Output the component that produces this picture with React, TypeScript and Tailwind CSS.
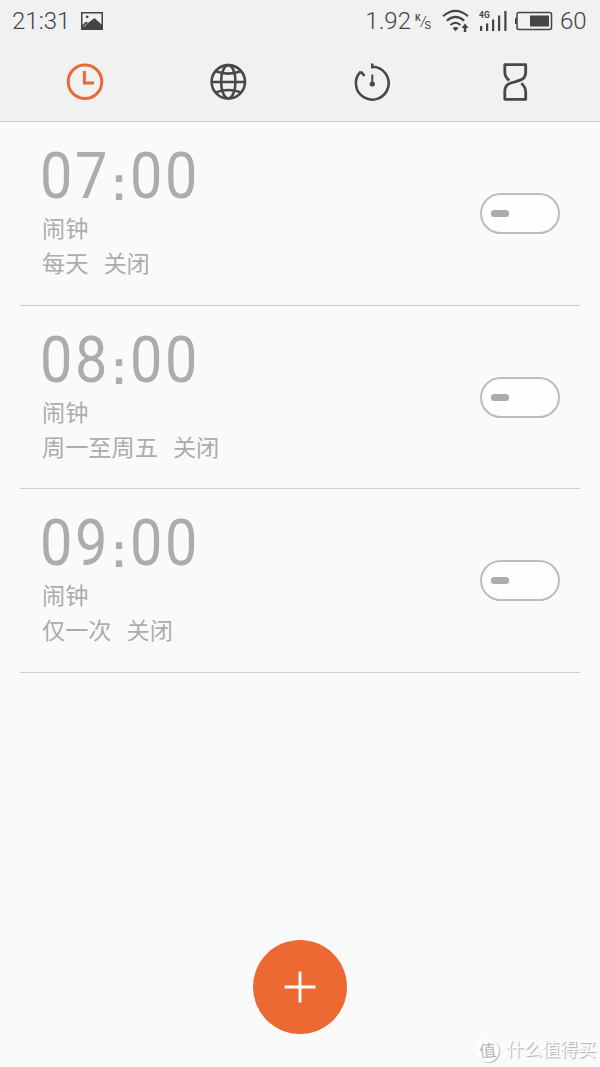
type Alarm = { hour: string; minute: string; label: string; repeat: string; state: string };

const alarms: Alarm[] = [
  { hour: "07", minute: "00", label: "闹钟", repeat: "每天", state: "关闭" },
  { hour: "08", minute: "00", label: "闹钟", repeat: "周一至周五", state: "关闭" },
  { hour: "09", minute: "00", label: "闹钟", repeat: "仅一次", state: "关闭" },
];

function StatusBar() {
  return (
    <div className="flex h-[41px] items-center pl-[12px] pr-[13px] text-[24px] font-light leading-none text-[#444]">
      <span className="w-[69px] whitespace-nowrap">21:31</span>
      <svg className="h-[18px] w-[22px]" viewBox="0 0 22 18">
        <path fill="#444" fillRule="evenodd" d="M0 0H22V18H0ZM1.5 1.5V13L5.2 9.5L7 11L13.5 6L20.5 12.5V1.5Z" />
        <circle cx="6.2" cy="4.8" r="1.4" fill="#444" />
        <path d="M2.5 15 6 11.5" stroke="#eee" strokeWidth="0.8" />
      </svg>
      <div className="ml-auto flex items-center">
        <span>1.92</span>
        <svg className="ml-[4px] h-[20px] w-[18px]" viewBox="0 0 18 20" fill="#444" fontFamily="Roboto, sans-serif">
          <text x="0" y="9.5" fontSize="9" fontWeight="500">K</text>
          <path d="M11 5 5.5 16" stroke="#555" strokeWidth="1" />
          <text x="9.5" y="18" fontSize="11" fontWeight="400">S</text>
        </svg>
        <svg className="ml-[9px] h-[24px] w-[28px]" viewBox="0 0 28 24" fill="none" stroke="#444" strokeWidth="2">
          <path d="M1 7.2Q13.5-3.5 26 7.2M4.8 11.8Q13.5 4 22.2 11.8M8.5 16Q13.5 11.5 18.5 16" />
          <path d="M10.5 19Q13.5 17 16.5 19L13.5 22.3Z" fill="#444" stroke="none" />
          <path d="M23 14.5 26.5 19H24.2V23H21.8V19H19.5Z" fill="#444" stroke="none" />
        </svg>
        <svg className="ml-[9px] h-[22px] w-[29px]" viewBox="0 0 29 22" fill="#444">
          <text x="0" y="8" fontSize="8.5" fontWeight="700" fontFamily="Roboto, sans-serif">4G</text>
          <path d="M1 16H3.2V21H1ZM7 13.5H9.2V21H7ZM13 9.5H15.2V21H13ZM19 5.5H21.2V21H19ZM25.3 1H27.5V21H25.3Z" />
        </svg>
        <svg className="ml-[7px] mr-[7px] h-[20px] w-[38px]" viewBox="0 0 38 20">
          <rect x="2" y="1.5" width="34.5" height="17" rx="2" fill="none" stroke="#444" strokeWidth="1.5" />
          <path d="M0 7H2V13H0ZM15 4.5H34V15.5H15Z" fill="#444" />
        </svg>
        <span className="w-[27px] whitespace-nowrap">60</span>
      </div>
    </div>
  );
}

function TabBar() {
  return (
    <nav className="flex h-[80px] justify-between px-[65px]">
      <svg className="h-[80px] w-[40px]" viewBox="0 0 40 80" fill="none" stroke="#e66a3a" strokeWidth="3">
        <circle cx="20" cy="40.7" r="16.8" />
        <path d="M19.4 30V42H29" />
      </svg>
      <svg className="h-[80px] w-[40px]" viewBox="0 0 40 80" fill="none" stroke="#484848" strokeWidth="2.6">
        <circle cx="20.3" cy="40.8" r="16.7" />
        <ellipse cx="20.3" cy="40.8" rx="7.2" ry="16.7" />
        <path d="M3.3 41H37.3M7.8 30.2Q20.3 35 32.8 30.2M7.8 51.4Q20.3 46.6 32.8 51.4" />
      </svg>
      <svg className="h-[80px] w-[40px]" viewBox="0 0 40 80" fill="none" stroke="#484848" strokeWidth="2.6">
        <path d="M20.3 22.5V27.5M20.3 25.8A16.4 16.4 0 1 1 8.7 30.6M12.5 34.8 8.7 30.6" />
        <path d="M20.3 33.5V43" strokeWidth="2" />
        <circle cx="20.3" cy="43" r="2.6" fill="#484848" stroke="none" />
      </svg>
      <svg className="h-[80px] w-[40px]" viewBox="0 0 40 80" fill="none" stroke="#484848" strokeWidth="2.8" strokeLinejoin="round">
        <path d="M14.2 39.5Q9.8 36 9.8 31V23.7H30.7V31C30.7 37 28 38.8 20 40.8C12 42.5 9.8 45 9.8 51V58.3H30.7V51Q30.7 46 26.3 42.3" />
      </svg>
    </nav>
  );
}

function AlarmRow({ alarm }: { alarm: Alarm }) {
  return (
    <li className="flex h-[183.5px] items-start justify-between border-b border-[#cecece] pl-[22px] pr-[20px] text-[#acacac]">
      <div className="pt-[22px]">
        <div className="-ml-[2px] flex h-[66px] origin-left scale-x-[0.9] items-center font-[Roboto,sans-serif] text-[64px] leading-[66px] tracking-[2.9px]">
          <span>{alarm.hour}</span>
          <span className="w-[22.2px] pr-[2px] pt-[14px] text-center font-['Liberation_Sans',sans-serif] text-[48px] font-bold leading-[66px] tracking-normal">:</span>
          <span>{alarm.minute}</span>
        </div>
        <div className="mt-[2px] text-[23.2px] leading-[35px]">{alarm.label}</div>
        <div className="flex gap-[15px] text-[23.2px] leading-[35px]">
          <span>{alarm.repeat}</span>
          <span>{alarm.state}</span>
        </div>
      </div>
      <button className="mt-[71px] flex h-[41px] w-[80px] items-center rounded-full border-2 border-[#bcbcbc] bg-[#fdfdfd] pl-[9px]" aria-label={alarm.state}>
        <span className="h-[7px] w-[18px] rounded-[3px] bg-[#acacac]" />
      </button>
    </li>
  );
}

export default function App() {
  return (
    <div className="relative flex h-[1067px] w-[600px] flex-col overflow-hidden bg-[#fafafa] font-[Roboto,'Noto_Sans_CJK_SC',sans-serif]">
      <header className="h-[122px] border-b border-[#cfcfcf] bg-[#f1f1f1]">
        <StatusBar />
        <TabBar />
      </header>
      <ul className="px-[20px]">
        {alarms.map((alarm) => (
          <AlarmRow key={alarm.hour} alarm={alarm} />
        ))}
      </ul>
      <button className="mx-auto mb-[33px] mt-auto flex size-[94px] items-center justify-center rounded-full bg-[#ed6933]" aria-label="+">
        <svg className="size-[32px]" viewBox="0 0 32 32" stroke="#fff" strokeWidth="2.8">
          <path d="M16 .5V31.5M.5 16H31.5" />
        </svg>
      </button>
      <div className="absolute bottom-[4px] right-[4px] flex items-center gap-[7px] text-[18px] leading-[26px] text-white [text-shadow:1px_1px_1px_#aaa]">
        <span className="flex size-[23px] -rotate-6 items-center justify-center rounded-full bg-white text-[17px] text-[#b5b5b5] shadow-[1px_1px_1px_#bbb] [text-shadow:none]">值</span>
        <span>什么值得买</span>
      </div>
    </div>
  );
}
